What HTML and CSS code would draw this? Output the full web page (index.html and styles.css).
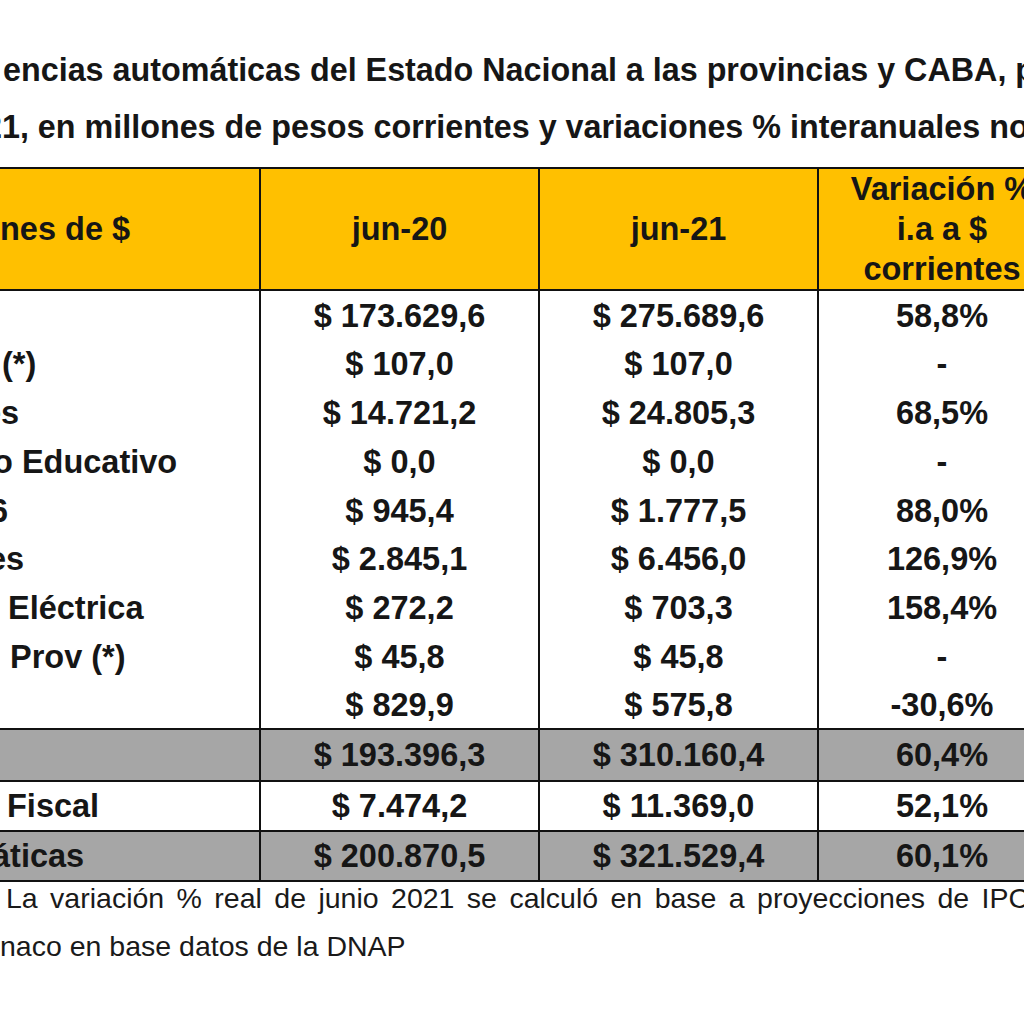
FILE: index.html
```html
<!DOCTYPE html>
<html lang="es">
<head>
<meta charset="utf-8">
<title>Transferencias automáticas</title>
<link rel="stylesheet" href="styles.css">
</head>
<body>
<div class="page">
  <h1 class="title">
    <span class="title-line line-1">encias automáticas del Estado Nacional a las provincias y CABA, p</span>
    <span class="title-line line-2">21, en millones de pesos corrientes y variaciones % interanuales no</span>
  </h1>
  <table class="data">
    <colgroup>
      <col class="c1"><col class="c2"><col class="c3"><col class="c4">
    </colgroup>
    <thead>
      <tr class="head">
        <th class="label">nes de $</th>
        <th>jun-20</th>
        <th>jun-21</th>
        <th class="var">Variación %<br>i.a a $<br>corrientes</th>
      </tr>
    </thead>
    <tbody class="body">
      <tr><td class="label"></td><td>$ 173.629,6</td><td>$ 275.689,6</td><td>58,8%</td></tr>
      <tr><td class="label ind-p2">(*)</td><td>$ 107,0</td><td>$ 107,0</td><td>-</td></tr>
      <tr><td class="label ind-m17">es</td><td>$ 14.721,2</td><td>$ 24.805,3</td><td>68,5%</td></tr>
      <tr><td class="label ind-m7">o Educativo</td><td>$ 0,0</td><td>$ 0,0</td><td>-</td></tr>
      <tr><td class="label ind-m10">6</td><td>$ 945,4</td><td>$ 1.777,5</td><td>88,0%</td></tr>
      <tr><td class="label ind-m12">es</td><td>$ 2.845,1</td><td>$ 6.456,0</td><td>126,9%</td></tr>
      <tr><td class="label ind-p8">Eléctrica</td><td>$ 272,2</td><td>$ 703,3</td><td>158,4%</td></tr>
      <tr><td class="label ind-p10">Prov (*)</td><td>$ 45,8</td><td>$ 45,8</td><td>-</td></tr>
      <tr><td class="label"></td><td>$ 829,9</td><td>$ 575,8</td><td>-30,6%</td></tr>
    </tbody>
    <tbody class="totals">
      <tr class="gray first"><td class="label"></td><td>$ 193.396,3</td><td>$ 310.160,4</td><td>60,4%</td></tr>
      <tr class="white"><td class="label ind-p7">Fiscal</td><td>$ 7.474,2</td><td>$ 11.369,0</td><td>52,1%</td></tr>
      <tr class="gray"><td class="label ind-m8">áticas</td><td>$ 200.870,5</td><td>$ 321.529,4</td><td>60,1%</td></tr>
    </tbody>
  </table>
  <p class="note note-1">La variación % real de junio 2021 se calculó en base a proyecciones de IPC</p>
  <p class="note note-2">naco en base datos de la DNAP</p>
</div>
</body>
</html>
```
FILE: styles.css
```css
html, body {
  margin: 0;
  padding: 0;
  background: #ffffff;
}

body {
  width: 1024px;
  height: 1024px;
  overflow: hidden;
  font-family: "Liberation Sans", Arial, sans-serif;
  color: #161616;
}

.page {
  width: 1024px;
  overflow: hidden;
}

.title {
  margin: 42px 0 0;
  font-size: 32.3px;
  font-weight: bold;
  line-height: 57px;
  white-space: nowrap;
}

.title-line {
  display: block;
}

.line-1 { text-indent: 3px; }
.line-2 { text-indent: -16px; }

.data {
  margin-top: 11px;
  border-collapse: collapse;
  table-layout: fixed;
  width: 1066px;
  font-size: 32.5px;
  font-weight: bold;
}

.c1 { width: 260px; }
.c2 { width: 279px; }
.c3 { width: 279px; }
.c4 { width: 248px; }

.data th,
.data td {
  padding: 0;
  text-align: center;
  white-space: nowrap;
  border-left: 2px solid #111;
  border-right: 2px solid #111;
}

.data .label {
  text-align: left;
  border-left: none;
}

.head th {
  background: #ffc000;
  height: 119px;
  border-top: 2px solid #111;
  border-bottom: 2px solid #111;
  line-height: 40px;
  vertical-align: middle;
}

.body tr {
  height: 48.8px;
}

.body td {
  line-height: 36px;
  vertical-align: middle;
  padding-top: 2px;
}

.totals tr {
  height: 50px;
}

.totals td {
  border-top: 2px solid #111;
  border-bottom: 2px solid #111;
  line-height: 36px;
  vertical-align: middle;
}

.totals .first {
  height: 52px;
}

.gray td {
  background: #a6a6a6;
}

.white td {
  background: #ffffff;
}

.ind-p2 { text-indent: 2px; }
.ind-p7 { text-indent: 7px; }
.ind-p8 { text-indent: 8px; }
.ind-p10 { text-indent: 10px; }
.ind-m7 { text-indent: -7px; }
.ind-m8 { text-indent: -8px; }
.ind-m10 { text-indent: -10px; }
.ind-m12 { text-indent: -12px; }
.ind-m17 { text-indent: -17px; }

.note {
  margin: 0;
  font-size: 28.5px;
  font-weight: normal;
  line-height: 30px;
  white-space: nowrap;
  color: #1a1a1a;
}

.note-1 {
  margin-top: 1px;
  text-indent: 6px;
  word-spacing: 4.5px;
}

.note-2 {
  margin-top: 18px;
}
```
